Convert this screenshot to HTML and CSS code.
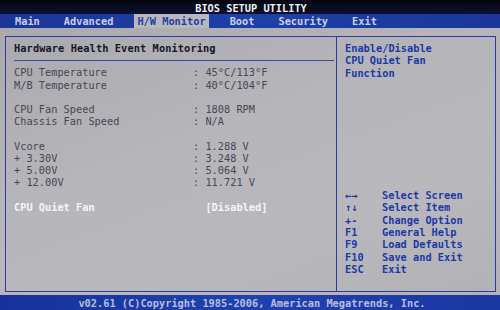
FILE: index.html
```html
<!DOCTYPE html>
<html lang="en">
<head>
    <meta charset="UTF-8">
    <title>BIOS Setup Utility</title>
    <link rel="stylesheet" href="styles.css">
</head>
<body>

<div class="screen">
    <div class="title">BIOS SETUP UTILITY</div>

    <nav class="menu">
        <span class="tab">Main</span>
        <span class="tab">Advanced</span>
        <span class="tab active">H/W Monitor</span>
        <span class="tab">Boot</span>
        <span class="tab">Security</span>
        <span class="tab">Exit</span>
    </nav>

    <div class="body">
        <div class="frame">
            <section class="pane-left">
                <h1>Hardware Health Event Monitoring</h1>
                <div class="rule"></div>

                <div class="rows">
                    <span class="label">CPU Temperature</span><span class="value">: 45°C/113°F</span>
                    <span class="label">M/B Temperature</span><span class="value">: 40°C/104°F</span>
                    <span class="gap"></span>
                    <span class="label">CPU Fan Speed</span><span class="value">: 1808 RPM</span>
                    <span class="label">Chassis Fan Speed</span><span class="value">: N/A</span>
                    <span class="gap"></span>
                    <span class="label">Vcore</span><span class="value">: 1.288 V</span>
                    <span class="label">+ 3.30V</span><span class="value">: 3.248 V</span>
                    <span class="label">+ 5.00V</span><span class="value">: 5.064 V</span>
                    <span class="label">+ 12.00V</span><span class="value">: 11.721 V</span>
                    <span class="gap"></span>
                    <span class="label selected">CPU Quiet Fan</span><span class="value selected">  [Disabled]</span>
                </div>
            </section>

            <aside class="pane-right">
                <p class="help">Enable/Disable<br>CPU Quiet Fan<br>Function</p>

                <div class="keys">
                    <span>←→</span><span>Select Screen</span>
                    <span>↑↓</span><span>Select Item</span>
                    <span>+-</span><span>Change Option</span>
                    <span>F1</span><span>General Help</span>
                    <span>F9</span><span>Load Defaults</span>
                    <span>F10</span><span>Save and Exit</span>
                    <span>ESC</span><span>Exit</span>
                </div>
            </aside>
        </div>
    </div>

    <footer class="footer">v02.61 (C)Copyright 1985-2006, American Megatrends, Inc.</footer>
</div>

</body>
</html>
```

FILE: styles.css
```css
body {
    margin: 0;
    padding: 0;
    background: #0a0a14;
    font-family: 'DejaVu Sans Mono', 'Liberation Mono', monospace;
    font-size: 10.3px;
    line-height: 12.33px;
}
.screen {
    width: 500px;
    height: 310px;
    display: flex;
    flex-direction: column;
    overflow: hidden;
}
.title {
    height: 14px;
    line-height: 16px;
    background: linear-gradient(180deg, #05050c, #0c1030);
    color: #f0f0f4;
    font-weight: bold;
    text-align: center;
    padding-left: 2px;
}
.menu {
    height: 14px;
    display: flex;
    gap: 18px;
    padding-left: 12px;
    background: linear-gradient(90deg, #1a3596, #1e40aa 50%, #1a3698);
    color: #c9cfe6;
    font-weight: bold;
}
.tab {
    padding: 0 3px;
    line-height: 15px;
}
.tab.active {
    background: #b9b9bd;
    color: #1f3ea4;
}
.body {
    flex: 1;
    padding: 8px 4px 3px 5px;
    background: linear-gradient(160deg, #a9a9ae, #b6b6ba 40%, #b9b9bd 70%, #b1b1b6);
}
.frame {
    height: 100%;
    box-sizing: border-box;
    border: 1px solid #2c3c9c;
    display: grid;
    grid-template-columns: 331px 1fr;
}
.pane-left {
    border-right: 1px solid #2c3c9c;
    padding: 5px 0 0 8px;
}
.pane-left h1 {
    margin: 0;
    font-size: 10.3px;
    font-weight: bold;
    color: #16161e;
    letter-spacing: 0.1px;
}
.rule {
    height: 1px;
    background: #3a4aa6;
    margin: 6px 2px 5px 0;
}
.rows {
    display: grid;
    grid-template-columns: 179px 1fr;
    line-height: 12.2px;
    color: #474753;
}
.rows .gap {
    grid-column: 1 / -1;
    height: 12.2px;
}
.value {
    white-space: pre;
}
.selected {
    color: #f4f4f6;
    font-weight: bold;
}
.pane-right {
    padding: 5px 0 0 8px;
    color: #2038a6;
    font-weight: bold;
    display: flex;
    flex-direction: column;
}
.help {
    margin: 0;
}
.keys {
    margin-top: 110px;
    display: grid;
    grid-template-columns: 37px 1fr;
}
.footer {
    height: 15px;
    line-height: 16px;
    background: linear-gradient(90deg, #17309a, #1f42b0 50%, #1a36a0);
    color: #b7bedc;
    text-align: center;
    font-weight: bold;
    padding-left: 4px;
}
```
